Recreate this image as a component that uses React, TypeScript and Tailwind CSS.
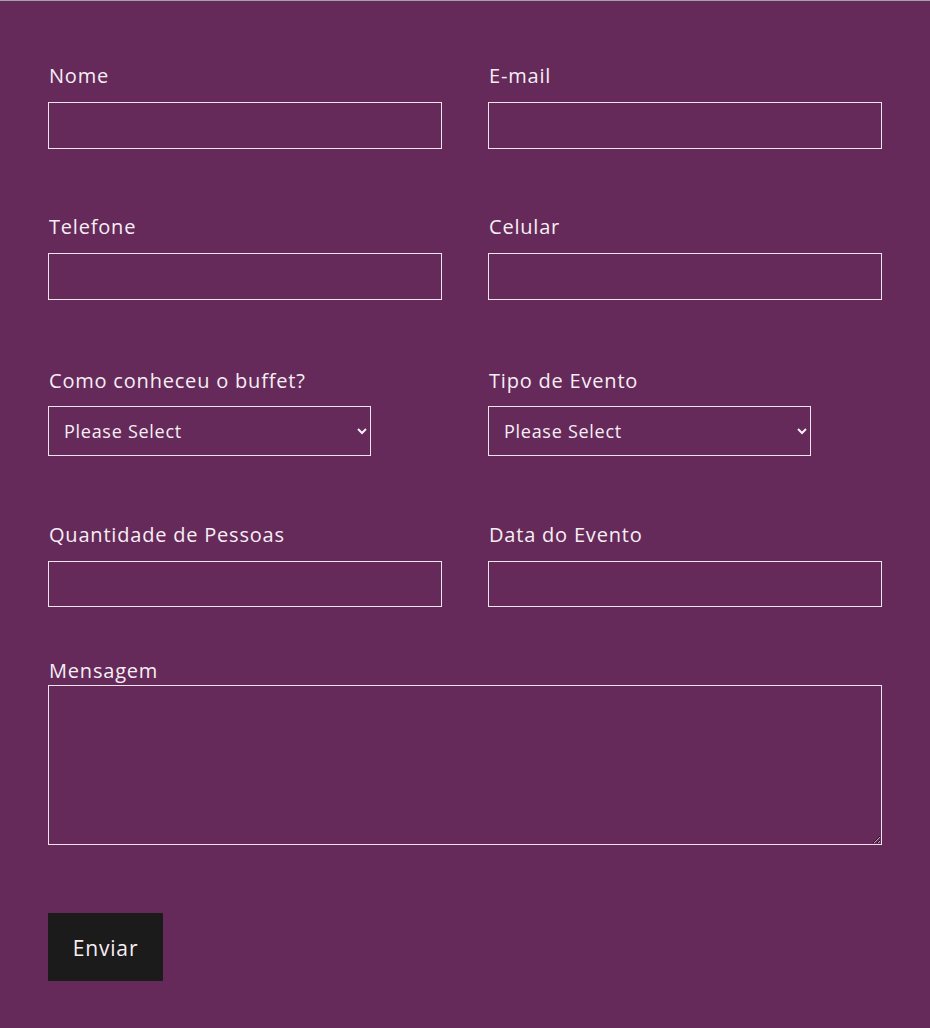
import React from 'react'

const font = { fontFamily: '"Open Sans", "Noto Sans", sans-serif' }

const labelCls = 'block h-[30px] leading-[32px] pl-px text-[20px] tracking-[0.04em] text-[#f7eef5]'

function Field({ label, className = '', h = 'h-[47px]' }: { label: string; className?: string; h?: string }) {
  return (
    <div className={className}>
      <label className={`${labelCls} mb-3`}>{label}</label>
      <input
        type="text"
        className={`block w-full ${h} border border-[#efe4ec] bg-transparent outline-none`}
      />
    </div>
  )
}

function SelectField({ label }: { label: string }) {
  return (
    <div>
      <label className={`${labelCls} mb-[11px]`}>{label}</label>
      <select className="block w-[323px] h-[50px] border border-[#efe4ec] bg-transparent pl-[11px] pr-2 text-[18px] tracking-[0.04em] text-[#f7eef5] outline-none">
        <option className="text-black">Please Select</option>
      </select>
    </div>
  )
}

export default function App() {
  return (
    <div
      className="w-[930px] min-h-[1028px] bg-[#652a59] border-t border-[#a8a0a6] px-[48px] pt-[59px] pb-[46px]"
      style={font}
    >
      <div className="grid grid-cols-2 gap-x-[46px]">
        <Field label="Nome" />
        <Field label="E-mail" />
        <Field label="Telefone" className="mt-[62px]" />
        <Field label="Celular" className="mt-[62px]" />
        <div className="mt-[65px]">
          <SelectField label="Como conheceu o buffet?" />
        </div>
        <div className="mt-[65px]">
          <SelectField label="Tipo de Evento" />
        </div>
        <Field label="Quantidade de Pessoas" className="mt-[63px]" h="h-[46px]" />
        <Field label="Data do Evento" className="mt-[63px]" h="h-[46px]" />
      </div>
      <div className="mt-[48px]">
        <label className={labelCls}>Mensagem</label>
        <textarea className="block w-full h-[160px] border border-[#efe4ec] bg-transparent outline-none" />
      </div>
      <button className="mt-[68px] w-[115px] h-[68px] pt-[3px] bg-[#1b1b1b] text-[#f7eef5] text-[21px] tracking-[0.04em]">
        Enviar
      </button>
    </div>
  )
}
